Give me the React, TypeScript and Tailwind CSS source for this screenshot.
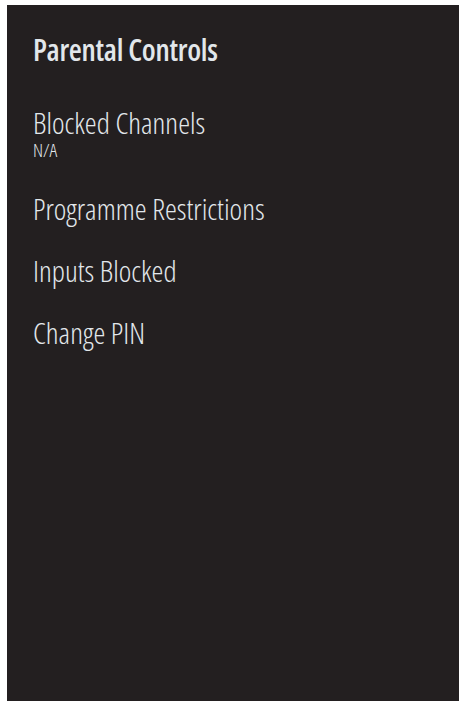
export default function App() {
  const font = { fontFamily: "'Open Sans', 'DejaVu Sans', sans-serif", fontStretch: "75%" } as const;
  return (
    <div className="w-[466px] h-[715px] bg-white pt-[5px] pl-[7px]">
      <div
        className="w-[452px] h-[696px] bg-[#231f20] pl-[26px] pt-[30px] text-[#e2e7eb]"
        style={font}
      >
        <h1 className="text-[30px] leading-none font-semibold tracking-[-0.3px]">Parental Controls</h1>
        <div className="mt-[43px] flex flex-col gap-[32px]">
          <div className="flex flex-col">
            <div className="text-[30px] leading-none font-[350]">Blocked Channels</div>
            <div className="mt-[3px] text-[19px] leading-none font-[350]">N/A</div>
          </div>
          <div className="mt-[2px] text-[30px] leading-none font-[350]">Programme Restrictions</div>
          <div className="text-[30px] leading-none font-[350]">Inputs Blocked</div>
          <div className="text-[30px] leading-none font-[350]">Change PIN</div>
        </div>
      </div>
    </div>
  );
}
